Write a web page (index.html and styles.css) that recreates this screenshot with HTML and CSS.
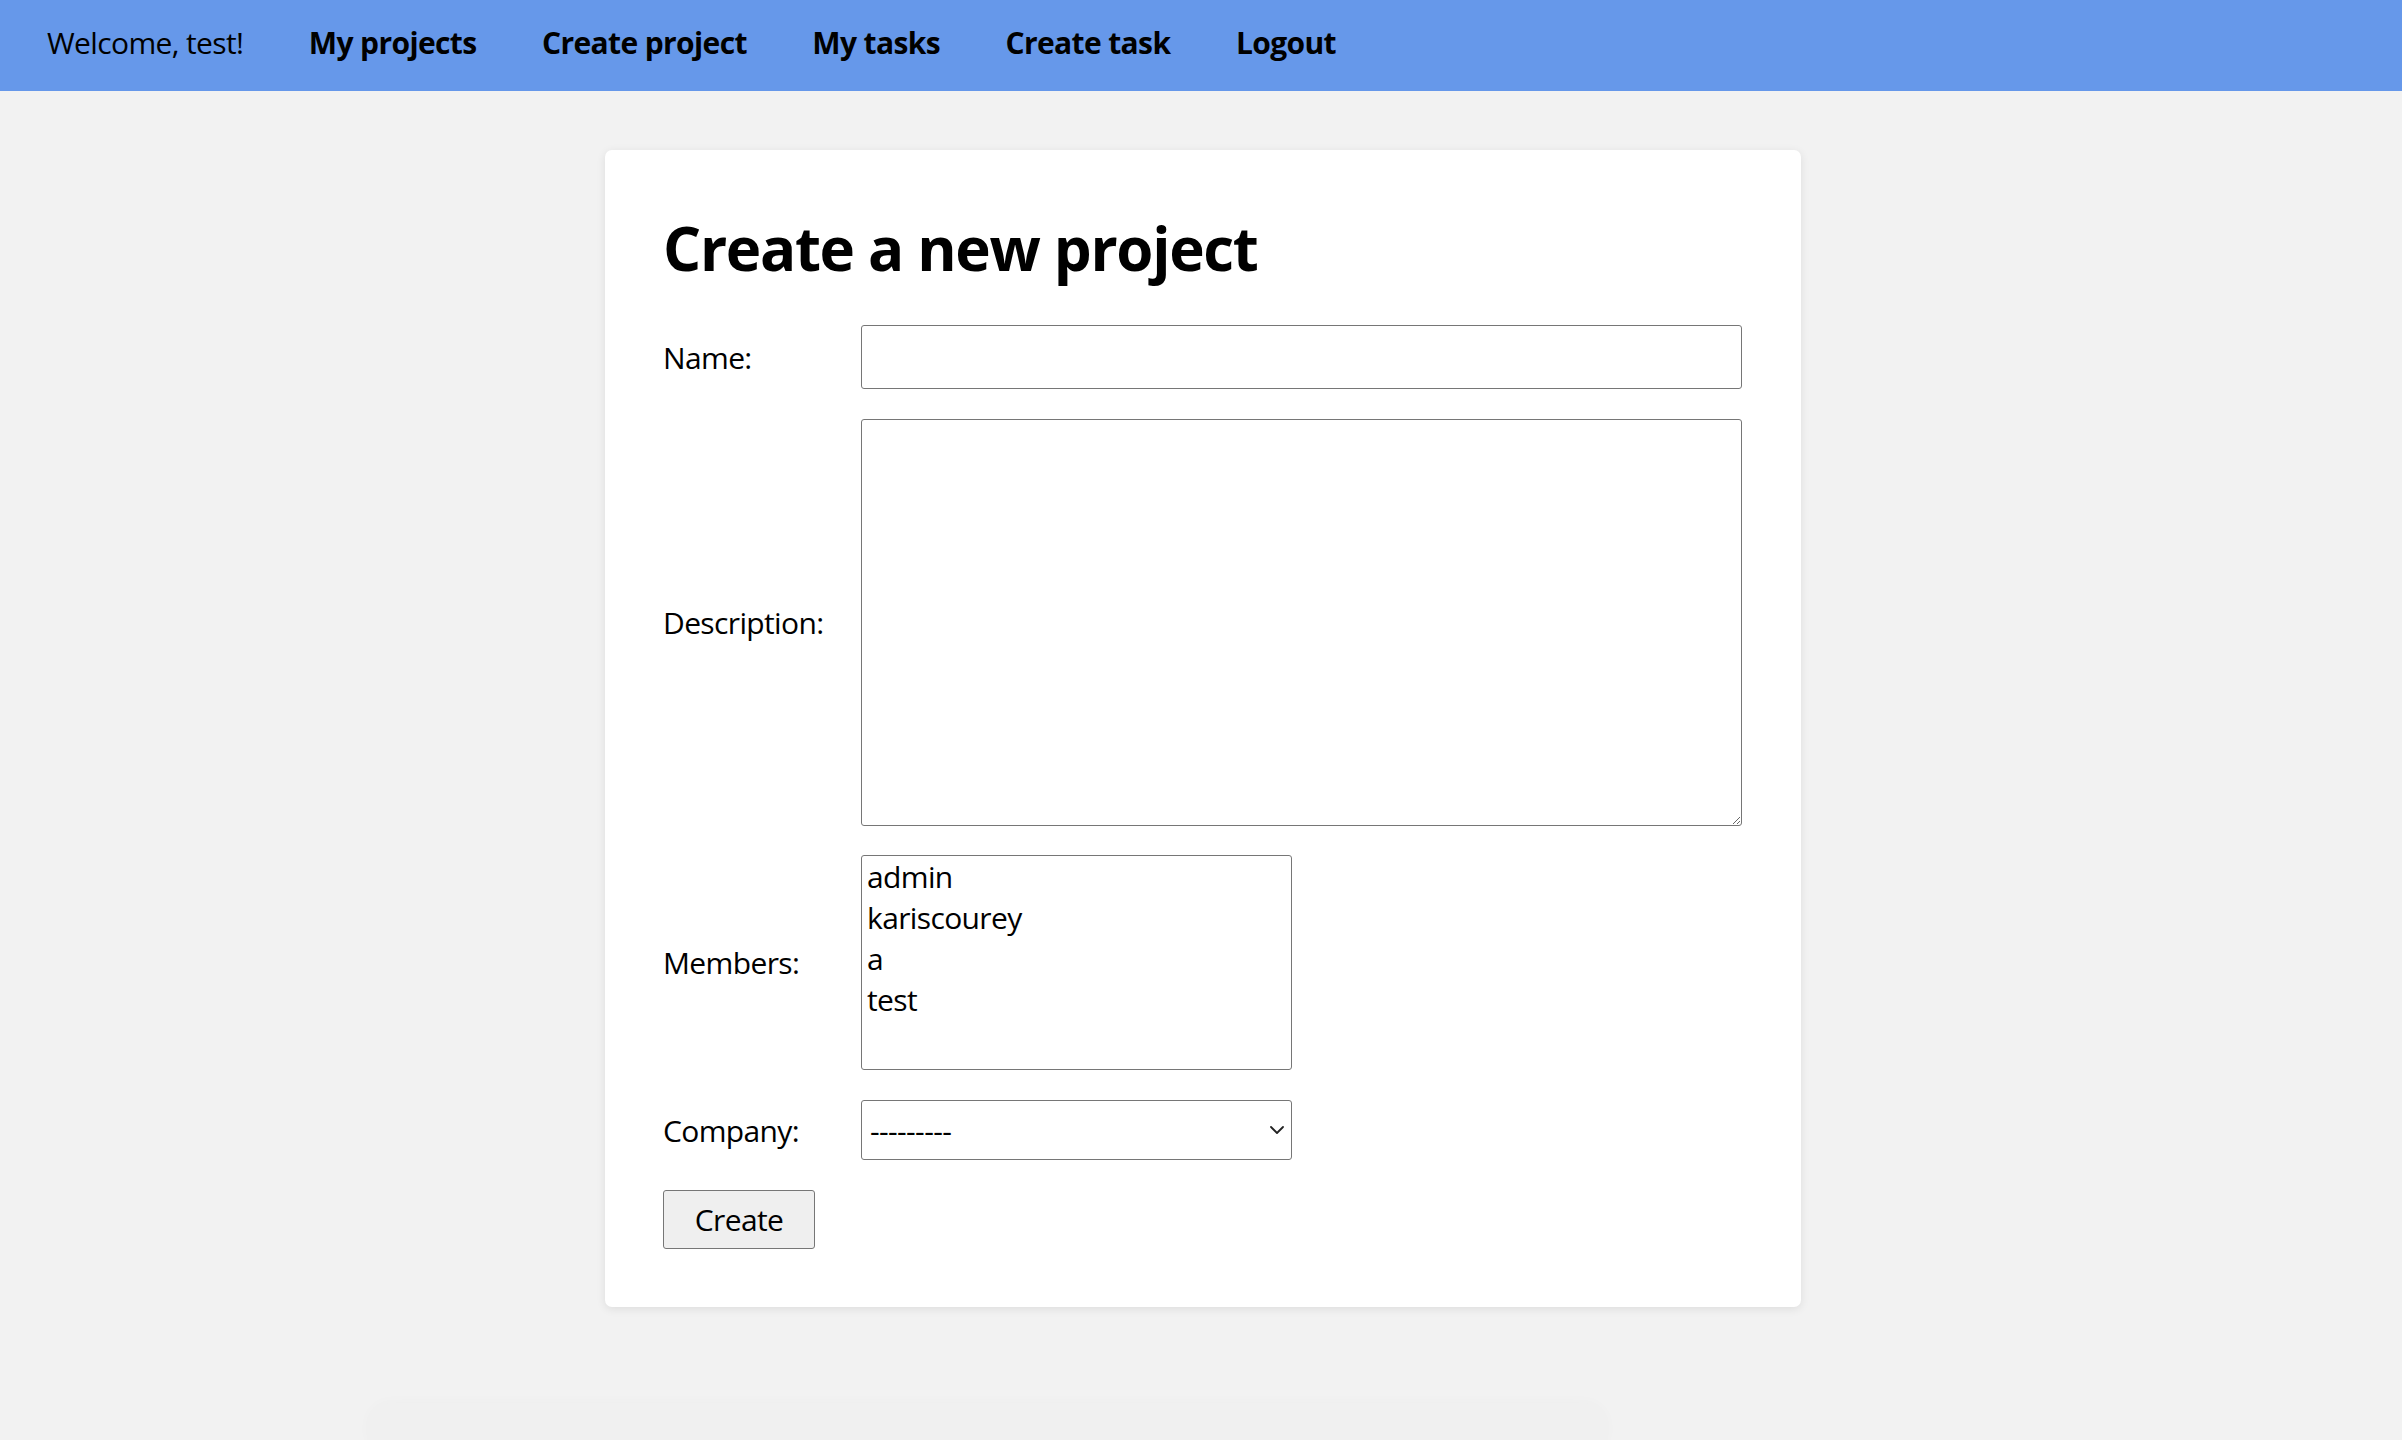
FILE: index.html
```html
<!DOCTYPE html>
<html lang="en">
<head>
<meta charset="utf-8">
<title>Create a new project</title>
<link rel="stylesheet" href="styles.css">
</head>
<body>
<nav class="topnav">
  <span class="welcome">Welcome, test!</span>
  <a class="navlink" href="#">My projects</a>
  <a class="navlink" href="#">Create project</a>
  <a class="navlink" href="#">My tasks</a>
  <a class="navlink" href="#">Create task</a>
  <a class="navlink" href="#">Logout</a>
</nav>
<main class="card">
  <h1 class="title">Create a new project</h1>
  <form class="form">
    <div class="field field-name">
      <label class="label" for="name">Name:</label>
      <input class="text-input" id="name" type="text">
    </div>
    <div class="field field-desc">
      <label class="label" for="desc">Description:</label>
      <textarea class="textarea" id="desc"></textarea>
    </div>
    <div class="field field-members">
      <label class="label" for="members">Members:</label>
      <select class="listbox" id="members" multiple>
        <option>admin</option>
        <option>kariscourey</option>
        <option>a</option>
        <option>test</option>
      </select>
    </div>
    <div class="field field-company">
      <label class="label" for="company">Company:</label>
      <span class="select-wrap">
        <select class="dropdown" id="company">
          <option>---------</option>
        </select>
        <svg class="chevron" width="16" height="10" viewBox="0 0 16 10" aria-hidden="true"><path d="M2 2 L8 8 L14 2" fill="none" stroke="#222" stroke-width="1.8" stroke-linecap="round" stroke-linejoin="round"/></svg>
      </span>
    </div>
    <button class="submit" type="button">Create</button>
  </form>
</main>
<div class="ghost"></div>
</body>
</html>
```

FILE: styles.css
```css
html, body {
  margin: 0;
  padding: 0;
}
body {
  background: #f2f2f2;
  font-family: "Open Sans", "Noto Sans", sans-serif;
  font-size: 30px;
  letter-spacing: -0.021em;
  color: #000;
  overflow: hidden;
}
.topnav {
  display: flex;
  align-items: flex-start;
  gap: 65.5px;
  height: 91px;
  box-sizing: border-box;
  padding: 22px 0 0 47px;
  background: #6698ea;
  line-height: 41px;
  font-size: 30px;
}
.welcome {
  font-weight: 400;
}
.navlink {
  color: #000;
  font-weight: 700;
  text-decoration: none;
}
.card {
  display: block;
  width: 1196px;
  box-sizing: border-box;
  margin: 59px 0 0 calc(50% - 596px);
  padding: 57px 58px 58px;
  background: #fff;
  border-radius: 7px;
  box-shadow: 0 2px 10px rgba(0, 0, 0, 0.09);
}
.title {
  margin: 0;
  font-size: 60px;
  font-weight: 700;
  line-height: 82px;
  letter-spacing: -0.022em;
}
.form {
  display: flex;
  flex-direction: column;
  align-items: flex-start;
}
.field {
  display: grid;
  grid-template-columns: 198px 1fr;
  align-items: center;
  width: 100%;
}
.field-name { margin-top: 36px; }
.field-desc { margin-top: 30px; }
.field-members { margin-top: 29px; }
.field-company { margin-top: 30px; }
.label {
  font-size: 30px;
  line-height: 41px;
}
.text-input,
.textarea,
.listbox,
.dropdown {
  font-family: "Open Sans", "Noto Sans", sans-serif;
  font-size: 30px;
  letter-spacing: -0.021em;
  color: #000;
  background: #fff;
  border: 1px solid #767676;
  border-radius: 3px;
  box-sizing: border-box;
  margin: 0;
  outline: none;
}
.text-input {
  width: 881px;
  height: 64px;
  padding: 0 8px;
}
.textarea {
  display: block;
  width: 881px;
  height: 407px;
  padding: 4px 8px;
  resize: both;
}
.listbox {
  display: block;
  width: 431px;
  height: 215px;
  padding: 0 3px;
  overflow: hidden;
}
.listbox option {
  padding: 0 2px;
}
.select-wrap {
  position: relative;
  display: block;
  width: 431px;
  height: 60px;
}
.dropdown {
  display: block;
  width: 431px;
  height: 60px;
  padding: 0 40px 0 8px;
  -webkit-appearance: none;
  appearance: none;
}
.chevron {
  position: absolute;
  right: 7px;
  top: 25px;
  pointer-events: none;
}
.submit {
  margin-top: 30px;
  width: 152px;
  height: 59px;
  padding: 0;
  font-family: "Open Sans", "Noto Sans", sans-serif;
  font-size: 30px;
  letter-spacing: -0.021em;
  color: #000;
  background: #efefef;
  border: 1px solid #767676;
  border-radius: 3px;
}
.ghost {
  margin: 96px 0 0 367px;
  width: 1241px;
  height: 40px;
  border-radius: 24px 24px 0 0;
  background: #f0f0f0;
  box-shadow: 0 -2px 12px rgba(0, 0, 0, 0.02);
}
```
